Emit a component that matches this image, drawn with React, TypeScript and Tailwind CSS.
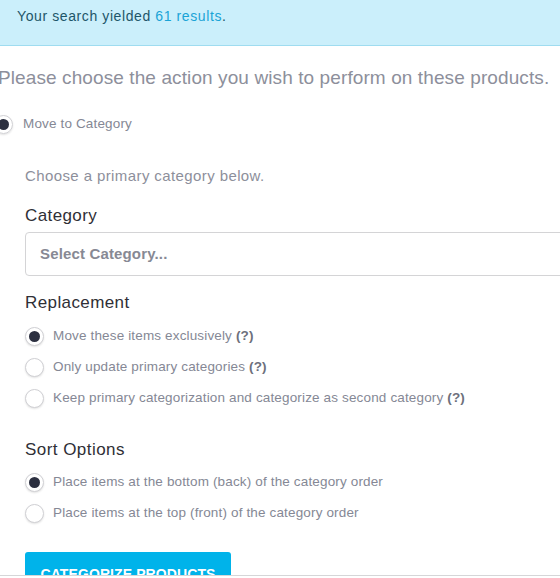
import React from "react";

function Radio({ checked, children }: { checked?: boolean; children: React.ReactNode }) {
  return (
    <label className="flex items-center gap-[9px] h-[20px] text-[13.5px] tracking-[0.15px] text-[#858895]">
      <span className="w-[19px] h-[19px] rounded-full border border-[#d0d0d4] bg-white shadow-[0_1px_2px_rgba(0,0,0,0.12)] flex items-center justify-center shrink-0">
        {checked && <span className="w-[11px] h-[11px] rounded-full bg-[#2c3040]" />}
      </span>
      <span className="whitespace-nowrap">{children}</span>
    </label>
  );
}

function Hint() {
  return <b className="font-bold text-[#6d707c]">(?)</b>;
}

export default function App() {
  return (
    <div className="h-[578px] bg-white font-['Liberation_Sans',Arial,sans-serif]">
      <div className="h-[576px] overflow-hidden border-b border-[#d6d6d8]">
        <div className="h-[46px] bg-[#cbeffb] border-b border-[#9fdcf0] pl-[17px] pt-[7px] text-[14px] leading-[18px] tracking-[0.6px] text-[#1d5669]">
          Your search yielded <a href="#" className="text-[#1aa3d6]">61 results</a>.
        </div>

        <div className="flex flex-col">
          <p className="mt-[19px] -ml-[2px] text-[19px] leading-[26px] tracking-[0.1px] text-[#8d8f9b] whitespace-nowrap">
            Please choose the action you wish to perform on these products.
          </p>

          <div className="mt-[23px] -ml-[6px] flex items-center gap-[10px] h-[20px] text-[13.5px] tracking-[0.15px] text-[#858895]">
            <span className="w-[19px] h-[19px] rounded-full border border-[#d0d0d4] shadow-[0_1px_2px_rgba(0,0,0,0.12)] flex items-center justify-center">
              <span className="w-[11px] h-[11px] rounded-full bg-[#2c3040]" />
            </span>
            Move to Category
          </div>

          <div className="pl-[25px] flex flex-col">
            <p className="mt-[32px] text-[15px] leading-[20px] tracking-[0.4px] text-[#8d8f9b]">Choose a primary category below.</p>

            <h3 className="mt-[19px] text-[17px] leading-[22px] tracking-[0.4px] text-[#2f2f36]">Category</h3>
            <div className="mt-[5px] h-[44px] w-[560px] rounded-[4px] border border-[#d4d4d6] flex items-center pl-[14px] text-[15px] tracking-[0.15px] font-bold text-[#878994]">
              Select Category...
            </div>

            <h3 className="mt-[16px] text-[17px] leading-[22px] tracking-[0.4px] text-[#2f2f36]">Replacement</h3>
            <div className="mt-[12px] flex flex-col gap-[11px]">
              <Radio checked>
                Move these items exclusively <Hint />
              </Radio>
              <Radio>
                Only update primary categories <Hint />
              </Radio>
              <Radio>
                Keep primary categorization and categorize as second category <Hint />
              </Radio>
            </div>

            <h3 className="mt-[31px] text-[17px] leading-[22px] tracking-[0.45px] text-[#2f2f36]">Sort Options</h3>
            <div className="mt-[11px] flex flex-col gap-[11px]">
              <Radio checked>Place items at the bottom (back) of the category order</Radio>
              <Radio>Place items at the top (front) of the category order</Radio>
            </div>

            <button className="mt-[29px] h-[44px] w-[206px] rounded-[3px] bg-[#00b3ea] text-white text-[14px] font-bold uppercase tracking-[0.1px]">
              Categorize Products
            </button>
          </div>
        </div>
      </div>
    </div>
  );
}
